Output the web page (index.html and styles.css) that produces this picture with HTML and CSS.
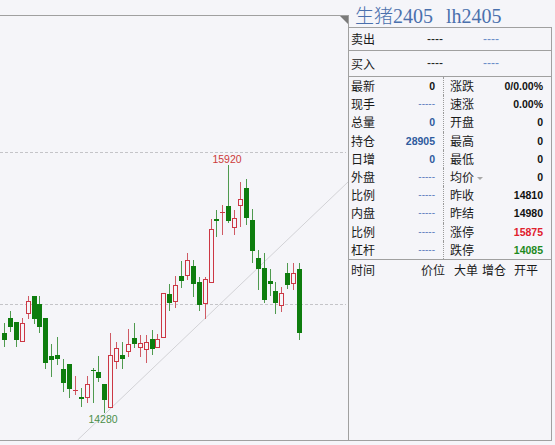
FILE: index.html
```html
<!DOCTYPE html>
<html lang="zh-CN">
<head>
  <meta charset="UTF-8">
  <title>生猪2405 行情</title>
  <link rel="stylesheet" href="styles.css">
</head>
<body>
<div class="screen">

  <!-- K-line chart -->
  <div class="chart-col">
    <div class="chart">
      <svg id="kline" width="348" height="424" viewBox="0 16 348 424"></svg>
    </div>
  </div>

  <!-- Quote panel -->
  <div class="quote-col">
    <div class="title"><span class="cn">生猪</span>2405 lh2405</div>
    <div class="quote">
      <div class="book sell">
        <div class="cell"><span class="lbl">卖出</span><span class="dash">----</span></div>
        <div class="cell end"><span class="dash blue">----</span></div>
      </div>
      <div class="book buy">
        <div class="cell"><span class="lbl">买入</span><span class="dash">----</span></div>
        <div class="cell end"><span class="dash blue">----</span></div>
      </div>

      <div class="stats">
        <div class="row">
          <div class="cell l"><span class="lbl">最新</span><span class="num">0</span></div>
          <div class="cell r"><span class="lbl">涨跌</span><span class="num">0/0.00%</span></div>
        </div>
        <div class="row">
          <div class="cell l"><span class="lbl">现手</span><span class="nil">-----</span></div>
          <div class="cell r"><span class="lbl">速涨</span><span class="num">0.00%</span></div>
        </div>
        <div class="row">
          <div class="cell l"><span class="lbl">总量</span><span class="num blue">0</span></div>
          <div class="cell r"><span class="lbl">开盘</span><span class="num">0</span></div>
        </div>
        <div class="row">
          <div class="cell l"><span class="lbl">持仓</span><span class="num blue">28905</span></div>
          <div class="cell r"><span class="lbl">最高</span><span class="num">0</span></div>
        </div>
        <div class="row">
          <div class="cell l"><span class="lbl">日增</span><span class="num blue">0</span></div>
          <div class="cell r"><span class="lbl">最低</span><span class="num">0</span></div>
        </div>
        <div class="row">
          <div class="cell l"><span class="lbl">外盘</span><span class="nil">-----</span></div>
          <div class="cell r"><span class="lbl">均价<i class="caret"></i></span><span class="num">0</span></div>
        </div>
        <div class="row">
          <div class="cell l"><span class="lbl">比例</span><span class="nil">-----</span></div>
          <div class="cell r"><span class="lbl">昨收</span><span class="num">14810</span></div>
        </div>
        <div class="row">
          <div class="cell l"><span class="lbl">内盘</span><span class="nil">-----</span></div>
          <div class="cell r"><span class="lbl">昨结</span><span class="num">14980</span></div>
        </div>
        <div class="row">
          <div class="cell l"><span class="lbl">比例</span><span class="nil">-----</span></div>
          <div class="cell r"><span class="lbl">涨停</span><span class="num red">15875</span></div>
        </div>
        <div class="row">
          <div class="cell l"><span class="lbl">杠杆</span><span class="nil">-----</span></div>
          <div class="cell r"><span class="lbl">跌停</span><span class="num green">14085</span></div>
        </div>
      </div>

      <div class="head">
        <span>时间</span><span>价位</span><span>大单</span><span>增仓</span><span>开平</span>
      </div>
    </div>
  </div>
</div>

<script>
  const NS = "http://www.w3.org/2000/svg";
  const svg = document.getElementById("kline");

  // [wickTop, bodyTop, bodyBottom, wickBottom, rising] in screen pixels
  const candles = [
    [323, 333, 340, 347, 0], [311, 318, 327, 332, 0], [322, 322, 340, 347, 0],
    [318, 323, 342, 342, 1], [296, 301, 314, 319, 1], [296, 296, 319, 324, 0],
    [296, 304, 327, 333, 0], [318, 318, 363, 369, 0], [344, 356, 360, 377, 0],
    [337, 355, 359, 365, 0], [359, 369, 383, 392, 0], [364, 364, 389, 398, 0],
    [376, 390, 391, 395, 1], [388, 397, 399, 407, 0], [376, 384, 398, 403, 1],
    [368, 370, 371, 403, 0], [356, 372, 378, 382, 0], [384, 384, 400, 413, 0],
    [333, 355, 408, 408, 1], [342, 348, 362, 369, 1], [342, 355, 359, 369, 0],
    [329, 344, 352, 357, 1], [323, 338, 344, 348, 0], [335, 343, 348, 357, 1],
    [335, 342, 350, 363, 1], [330, 339, 349, 355, 0], [334, 339, 348, 348, 1],
    [293, 293, 338, 338, 1], [284, 294, 303, 311, 0], [276, 285, 302, 308, 1],
    [261, 276, 281, 288, 0], [253, 260, 276, 280, 1], [260, 266, 284, 297, 0],
    [277, 282, 305, 311, 0], [277, 279, 304, 319, 1], [219, 229, 283, 283, 1],
    [210, 219, 221, 237, 0], [205, 212, 213, 235, 1], [165, 206, 221, 223, 0],
    [210, 218, 228, 235, 1], [182, 199, 206, 227, 1], [179, 188, 218, 225, 0],
    [209, 220, 251, 263, 0], [250, 258, 269, 290, 0], [253, 268, 300, 303, 0],
    [269, 281, 284, 296, 0], [282, 291, 303, 314, 0], [287, 293, 306, 312, 1],
    [263, 273, 285, 289, 0], [263, 273, 284, 290, 1], [263, 269, 333, 340, 0]
  ];

  function add(tag, attrs, text) {
    const el = document.createElementNS(NS, tag);
    for (const k in attrs) el.setAttribute(k, attrs[k]);
    if (text) el.textContent = text;
    svg.appendChild(el);
    return el;
  }

  function line(x1, y1, x2, y2, cls) {
    return add("line", { x1, y1, x2, y2, class: cls });
  }

  // grid + trend line
  line(0, 152.5, 346, 152.5, "grid");
  line(0, 304.5, 346, 304.5, "grid");
  line(77.6, 440, 348, 182, "trend");

  candles.forEach(([hi, top, bot, lo, up], i) => {
    const cx = Math.round(4 + 5.9 * i);
    const wx = cx + 0.5;
    if (up) {
      if (bot - top < 2) {
        line(wx, hi, wx, lo, "wick-up");
        add("rect", { x: cx - 2, y: top, width: 5, height: 1, class: "doji-up" });
        return;
      }
      if (top > hi) line(wx, hi, wx, top, "wick-up");
      if (lo > bot) line(wx, bot, wx, lo, "wick-up");
      add("rect", { x: cx - 1.5, y: top + 0.5, width: 4, height: bot - top - 1, class: "body-up" });
    } else {
      line(wx, hi, wx, lo, "wick-down");
      add("rect", { x: cx - 2, y: top, width: 5, height: Math.max(bot - top, 1), class: "body-down" });
    }
  });

  add("text", { x: 227, y: 163, class: "mark high" }, "15920");
  add("text", { x: 103, y: 423, class: "mark low" }, "14280");

  add("polygon", { points: "340,16 348,16 348,24", class: "corner" });
</script>
</body>
</html>
```

FILE: styles.css
```css
body {
  margin: 0; background: #f5f5f9; color: #1a1a1a;
  font-family: "Liberation Sans", "Noto Sans CJK SC", sans-serif;
}
.screen { display: flex; width: 555px; height: 445px; overflow: hidden; }

/* chart */
.chart-col { width: 349px; flex: none; }
.chart {
  margin-top: 15px; height: 424px;
  border-top: 1px solid #a0a0a0; border-right: 1px solid #a0a0a0; border-bottom: 1px solid #a0a0a0;
}
.chart svg { display: block; }
.grid { stroke: #c4c4c8; stroke-width: 1; stroke-dasharray: 3 2; }
.trend { stroke: #d2d2d6; stroke-width: 1; }
.wick-up { stroke: #cf5a64; stroke-width: 1; }
.wick-down { stroke: #4f9a4f; stroke-width: 1; }
.body-up { fill: #f5f5f9; stroke: #cc3744; stroke-width: 1; }
.doji-up { fill: #cc3744; }
.body-down { fill: #0e7d0e; }
.mark { font-family: "Liberation Sans", sans-serif; font-size: 10.5px; text-anchor: middle; }
.mark.high { fill: #cc3a3a; }
.mark.low { fill: #4a8f4a; }
.corner { fill: #7a7a7a; }

/* quote panel */
.quote-col { width: 206px; flex: none; }
.title {
  height: 25px; padding: 2px 0 0 6px; line-height: 25px;
  font-family: "Liberation Serif", "Noto Sans CJK SC", serif; font-size: 20px;
  color: #4a70ad; white-space: nowrap; word-spacing: 8px;
}
.title .cn { font-family: "Noto Sans CJK SC", sans-serif; font-size: 19px; font-weight: 300; }
.quote {
  width: 202px; height: 412px;
  border-top: 1px solid #a0a0a0; border-right: 1px solid #a0a0a0; border-bottom: 1px solid #a0a0a0;
}
.cell { display: flex; justify-content: space-between; align-items: center; }
.cell.end { justify-content: flex-end; }
.lbl { font-family: "Noto Sans CJK SC", sans-serif; font-size: 12px; padding-left: 2px; }

.book { display: grid; grid-template-columns: 94px 56px; border-bottom: 1px solid #a0a0a0; }
.book.sell { height: 22px; line-height: 22px; }
.book.buy { height: 25px; line-height: 25px; }
.dash { font-size: 12px; color: #222; }
.dash.blue { color: #6b8cc8; }

.stats { border-bottom: 1px solid #a0a0a0; }
.row { display: grid; grid-template-columns: 94px 1fr; height: 18.2px; line-height: 18.2px; }
.cell.l { padding-right: 8px; }
.cell.r { border-left: 1px dotted #9a9a9a; padding: 0 8px 0 4px; }
.num { font-size: 10.5px; font-weight: bold; color: #111; }
.num.blue { color: #2f5b9e; }
.num.red { color: #e0202c; }
.num.green { color: #1e8a1e; }
.nil { font-size: 10px; color: #5f7fbf; }
.caret {
  display: inline-block; width: 0; height: 0; margin-left: 3px; vertical-align: middle;
  border-left: 3px solid transparent; border-right: 3px solid transparent; border-top: 3px solid #a8a8a8;
}

.head {
  display: grid; grid-template-columns: 70px 33px 28px 32px auto;
  padding-left: 2px; height: 20px; line-height: 20px;
  font-family: "Noto Sans CJK SC", sans-serif; font-size: 12px;
}
```
